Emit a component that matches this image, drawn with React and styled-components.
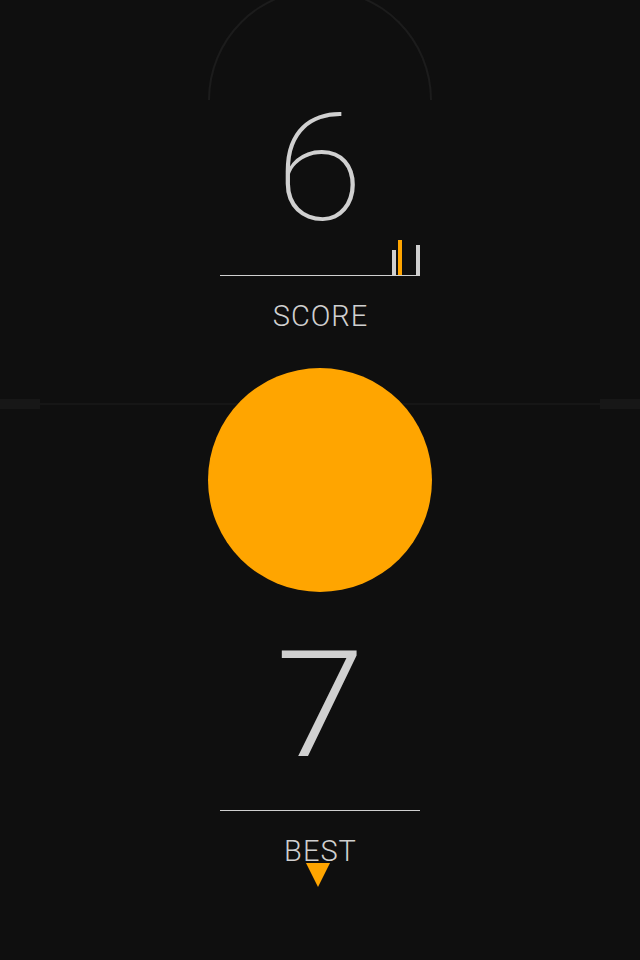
import React from "react"
import styled, { createGlobalStyle } from "styled-components"

const GlobalStyle = createGlobalStyle`
  html, body {
    margin: 0;
    padding: 0;
    background: #0f0f0f;
  }
`

const Screen = styled.div`
  width: 640px;
  height: 960px;
  overflow: hidden;
  background: #0f0f0f;

  display: flex;
  flex-direction: column;
  align-items: center;

  font-family: Roboto, "Liberation Sans", sans-serif;
  color: #d0d0d0;
`

const Arc = styled.div`
  flex-shrink: 0;
  width: 220px;
  height: 109px;
  margin-top: -11px;

  border: 2px solid #1c1c1c;
  border-bottom: none;
  border-radius: 112px 112px 0 0;
`

const Digit = styled.div`
  flex-shrink: 0;
  height: 120px;
  margin-top: ${props => props.$top}px;

  font-size: 148px;
  font-weight: ${props => props.$weight};
  line-height: 120px;
  transform: scaleX(1.08);
`

const Track = styled.div`
  flex-shrink: 0;
  width: 200px;
  height: 36px;
  margin-top: 9px;

  display: flex;
  align-items: flex-end;
  justify-content: flex-end;

  border-bottom: 1px solid #cfcfcf;
`

const Bar = styled.div`
  width: 4px;
  height: ${props => props.$height}px;
  margin-right: ${props => props.$gap}px;
  background: ${props => props.$color};
`

const Rule = styled.div`
  flex-shrink: 0;
  width: 200px;
  height: 1px;
  margin-top: 44px;
  background: #cfcfcf;
`

const Label = styled.div`
  flex-shrink: 0;
  height: 30px;
  margin-top: 25px;

  font-size: 29px;
  font-weight: 300;
  line-height: 30px;
  letter-spacing: 1px;
  text-indent: 1px;
`

const Middle = styled.div`
  position: relative;
  flex-shrink: 0;
  width: 640px;
  margin-top: 37px;

  display: flex;
  justify-content: center;
`

const Rail = styled.div`
  position: absolute;
  top: 31px;
  left: 0;
  right: 0;
  height: 10px;

  display: flex;
  align-items: center;
`

const RailCap = styled.div`
  width: 40px;
  height: 10px;
  background: #171717;
`

const RailLine = styled.div`
  flex: 1;
  height: 2px;
  background: #161616;
`

const Ball = styled.div`
  position: relative;
  width: 224px;
  height: 224px;
  border-radius: 50%;
  background: #ffa500;
`

const Marker = styled.div`
  flex-shrink: 0;
  width: 0;
  height: 0;
  margin-top: -3px;
  margin-left: -4px;

  border-left: 12px solid transparent;
  border-right: 12px solid transparent;
  border-top: 24px solid #ffa500;
`

const bars = [
  { height: 25, color: "#cfcfcf", gap: 2 },
  { height: 35, color: "#ffa500", gap: 14 },
  { height: 30, color: "#cfcfcf", gap: 0 },
]

const App = () => {
  return (
    <Screen>
      <GlobalStyle />
      <Arc />
      <Digit $top={10} $weight={100}>6</Digit>
      <Track>
        {bars.map((bar, i) => (
          <Bar key={i} $height={bar.height} $color={bar.color} $gap={bar.gap} />
        ))}
      </Track>
      <Label>SCORE</Label>

      <Middle>
        <Rail>
          <RailCap />
          <RailLine />
          <RailCap />
        </Rail>
        <Ball />
      </Middle>

      <Digit $top={54} $weight={300}>7</Digit>
      <Rule />
      <Label>BEST</Label>
      <Marker />
    </Screen>
  )
}

export default App
